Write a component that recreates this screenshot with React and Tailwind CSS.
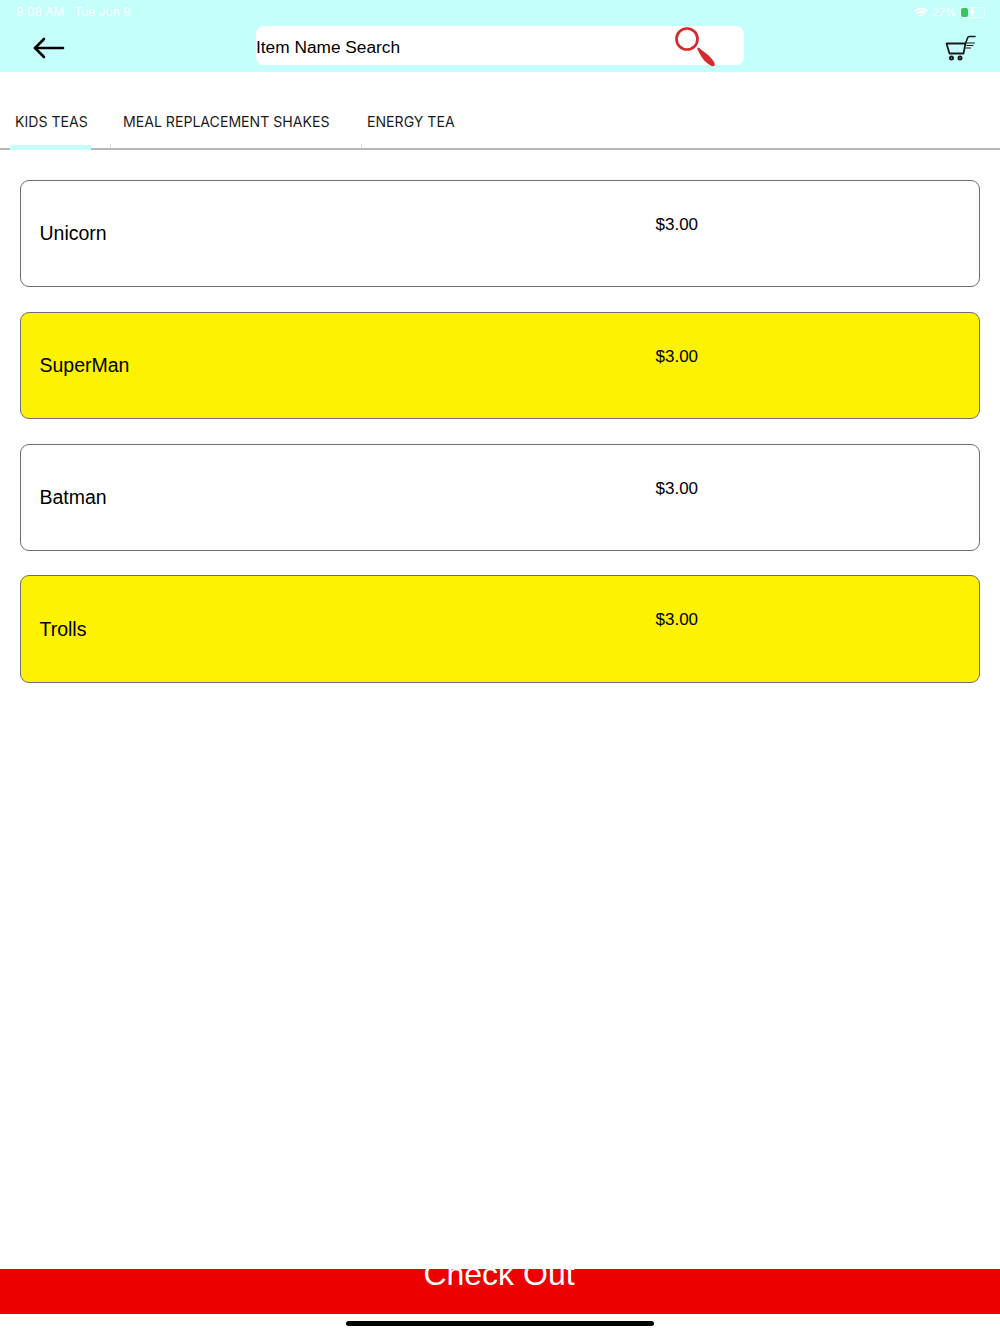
import React from "react";

const items = [
  { name: "Unicorn", bg: "bg-white" },
  { name: "SuperMan", bg: "bg-[#fdf200]" },
  { name: "Batman", bg: "bg-white" },
  { name: "Trolls", bg: "bg-[#fdf200]" },
];

const App = () => {
  return (
    <div className="relative flex flex-col h-[1334px] w-[1000px] overflow-hidden bg-white text-black font-['Liberation_Sans',sans-serif]">
      {/* Header */}
      <div className="relative h-[72px] bg-[#c4fffb] shrink-0">
        <div className="flex items-center justify-between h-6 pl-4 pr-[15px] text-white text-[12px] font-['Inter',sans-serif]">
          <div className="flex gap-[10px] opacity-90">
            <span>9:08 AM</span>
            <span>Tue Jun 9</span>
          </div>
          <div className="flex items-center gap-[4px]">
            <svg width="14" height="11" viewBox="0 0 14 11" fill="none" stroke="#fff" strokeWidth="1.8" strokeLinecap="round">
              <path d="M1 4c3.500-3 8.500-3 12 0" />
              <path d="M3.300 6.300c2.200-1.800 5.200-1.800 7.400 0" />
              <path d="M5.600 8.600c.8-.7 2-.7 2.800 0" />
            </svg>
            <span className="text-[11px]">27%</span>
            <div className="relative flex items-center h-[11px] w-[25px] rounded-[3px] border border-white/60">
              <div className="h-full w-[7px] rounded-[2px] bg-[#34c759]" />
              <svg className="absolute left-[8px] -top-[1px]" width="7" height="11" viewBox="0 0 7 11" fill="#fff">
                <path d="M4 0 1 6h2L2.500 11 6 4.500H4z" />
              </svg>
            </div>
          </div>
        </div>
        <div className="flex items-start pl-[33px] pr-6 mt-[2px]">
          <svg className="mt-[10px]" width="32" height="24" viewBox="0 0 32 24" fill="none" stroke="#000" strokeWidth="2.600" strokeLinecap="round" strokeLinejoin="round">
            <path d="M2 12h28" />
            <path d="M11 3 2 12l9 9" />
          </svg>
          <div className="relative flex items-center w-[488px] h-[39px] rounded-lg bg-white pt-[4px] text-[17.300px] ml-[191px]">
            Item Name Search
            <svg className="absolute left-[418px] top-0" width="42" height="42" viewBox="0 0 42 42" fill="none">
              <circle cx="13" cy="13" r="10.500" stroke="#d62a2f" strokeWidth="2.700" />
              <path d="M23 22.500 25 21.500C28 25 33 27 37 32C40 35.500 41.500 38 40.500 39.500C39 41 36.500 40 33 37C29 34 26 29 23 22.500z" fill="#d62a2f" />
            </svg>
          </div>
          <svg className="mt-[8px] ml-auto" width="31" height="28" viewBox="0 0 31 28" fill="none" stroke="#1a1a1a" strokeLinecap="round" strokeLinejoin="round">
            <path d="M1.500 9.500H20.500L18.500 19.500H4.500z" strokeWidth="1.800" />
            <path d="M20.500 9.500 22.500 4c.3-1 1-1.500 2-1.500H30" strokeWidth="1.600" />
            <path d="M22 9h7.500M22 11.500h6M21 14h4.500" strokeWidth="1.200" />
            <circle cx="6.500" cy="24" r="1.500" strokeWidth="2" />
            <circle cx="15" cy="24" r="1.500" strokeWidth="2" />
          </svg>
        </div>
      </div>

      {/* Tabs */}
      <div className="relative flex h-[78px] shrink-0 border-b-2 border-[#b8b8b8] pl-[15px] pt-[39px] text-[14.100px] text-[#1c1c1c] font-['Inter',sans-serif]">
        <span className="w-[108px]">KIDS TEAS</span>
        <span className="w-[244px]">MEAL REPLACEMENT SHAKES</span>
        <span>ENERGY TEA</span>
        <div className="absolute left-[10px] bottom-[-2px] h-[5px] w-[81px] bg-[#c4fffb]" />
        <div className="absolute left-[110px] bottom-0 h-[4px] w-px bg-[#dddddd]" />
        <div className="absolute left-[361px] bottom-0 h-[4px] w-px bg-[#dddddd]" />
      </div>

      {/* Items */}
      <div className="flex flex-col gap-[24.600px] px-5 pt-[30px] flex-1">
        {items.map((item) => (
          <div key={item.name} className={`relative flex items-center h-[107.200px] rounded-[9px] border border-[#6f6f6f] pl-[18.500px] pt-px text-[19.500px] ${item.bg}`}>
            {item.name}
            <span className="absolute left-[634.500px] top-[31px] text-[17px]">$3.00</span>
          </div>
        ))}
      </div>

      {/* Check out */}
      <div className="h-[45px] shrink-0 overflow-hidden bg-[#ec0000] pr-[2px] text-center text-white text-[32px] leading-[10px]">
        Check Out
      </div>
      <div className="h-[20px] shrink-0 flex justify-center pt-[7px]">
        <div className="h-[5px] w-[308px] rounded-full bg-black" />
      </div>
    </div>
  );
};

export default App;
